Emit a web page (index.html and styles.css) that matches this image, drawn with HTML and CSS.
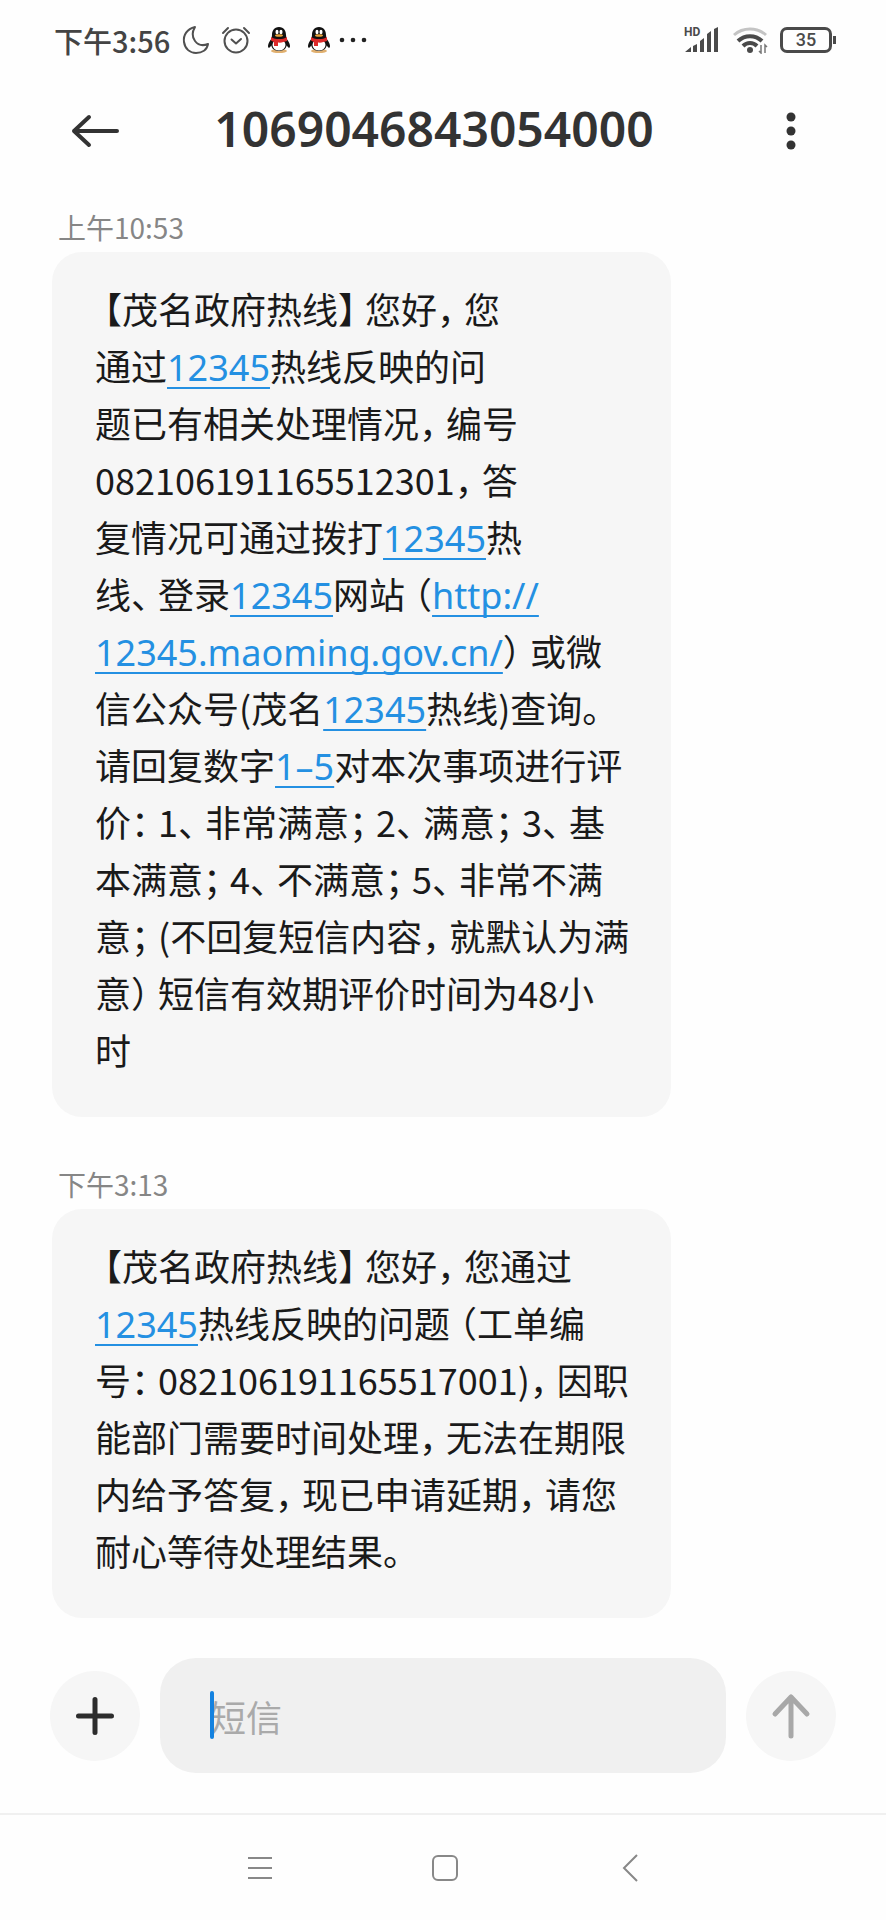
FILE: index.html
```html
<!DOCTYPE html>
<html lang="zh-CN">
<head>
    <meta charset="UTF-8">
    <meta name="viewport" content="width=device-width, initial-scale=1.0">
    <title>1069046843054000</title>
    <link rel="stylesheet" href="styles.css">
</head>
<body>

    <div class="status-bar">
        <span class="clock">下午3:56</span>
        <svg class="moon" width="28" height="30" viewBox="0 0 28 30" fill="none" stroke="#505050" stroke-width="2" stroke-linejoin="round">
            <path d="M13 2C5 4 1 10 2 17c1 7 6 11 12 11 6 0 11-3 12-9-5 2-10 1-13-3-3-4-3-9 0-14z"/>
        </svg>
        <svg class="alarm" width="30" height="30" viewBox="0 0 30 30" fill="none" stroke="#505050" stroke-width="2" stroke-linecap="round" stroke-linejoin="round">
            <circle cx="15" cy="16" r="11.5"/>
            <path d="M10.500 14.500l4.500 4 5-4.500M2 8l5-5M28 8l-5-5"/>
        </svg>
        <svg class="penguin" width="24" height="28" viewBox="0 0 24 28">
            <ellipse cx="12" cy="25" rx="8" ry="2" fill="#e0b070"/>
            <path d="M5 12C1 17 0 21 2 22l3-3zM19 12c4 5 5 9 3 10l-3-3z" fill="#111"/>
            <path d="M12 1c-5 0-7 4-7 8l-1 8c0 6 4 8 8 8s8-2 8-8l-1-8c0-4-2-8-7-8z" fill="#111"/>
            <ellipse cx="12" cy="19" rx="6.500" ry="5.500" fill="#fff"/>
            <ellipse cx="10" cy="6" rx="1.500" ry="2.300" fill="#fff"/>
            <ellipse cx="14" cy="6" rx="1.500" ry="2.300" fill="#fff"/>
            <ellipse cx="12" cy="9.500" rx="4" ry="1.300" fill="#e8a33a"/>
            <path d="M4 11c5 3 11 3 16 0v4c-3 1-6 2-9 1.500V20H7v-4l-3-1.500z" fill="#dc2a2a"/>
        </svg>
        <svg class="penguin" width="24" height="28" viewBox="0 0 24 28">
            <ellipse cx="12" cy="25" rx="8" ry="2" fill="#e0b070"/>
            <path d="M5 12C1 17 0 21 2 22l3-3zM19 12c4 5 5 9 3 10l-3-3z" fill="#111"/>
            <path d="M12 1c-5 0-7 4-7 8l-1 8c0 6 4 8 8 8s8-2 8-8l-1-8c0-4-2-8-7-8z" fill="#111"/>
            <ellipse cx="12" cy="19" rx="6.500" ry="5.500" fill="#fff"/>
            <ellipse cx="10" cy="6" rx="1.500" ry="2.300" fill="#fff"/>
            <ellipse cx="14" cy="6" rx="1.500" ry="2.300" fill="#fff"/>
            <ellipse cx="12" cy="9.500" rx="4" ry="1.300" fill="#e8a33a"/>
            <path d="M4 11c5 3 11 3 16 0v4c-3 1-6 2-9 1.500V20H7v-4l-3-1.500z" fill="#dc2a2a"/>
        </svg>
        <svg class="more-dots" width="28" height="6" viewBox="0 0 28 6" fill="#222">
            <circle cx="3" cy="3" r="2.300"/><circle cx="14" cy="3" r="2.300"/><circle cx="25" cy="3" r="2.300"/>
        </svg>

        <div class="status-right">
            <svg width="36" height="28" viewBox="0 0 36 28" fill="#4a4a4a">
                <text x="0" y="10" class="hd">HD</text>
                <path d="M1 26l6-5v5zM9 20l4-2v8H9zM16 15l4-3v14h-4zM23 8l4-3v21h-4zM30 3l4-2v25h-4z"/>
            </svg>
            <svg width="36" height="28" viewBox="0 0 36 28" fill="none" stroke-width="4">
                <path d="M2 9c9-8 23-8 32 0" stroke="#c4c4c4" stroke-width="3"/>
                <path d="M6 15c7-6.500 17-6.500 24 0M11 20c4-4 10-4 14 0" stroke="#4a4a4a"/>
                <circle cx="18" cy="24" r="3" fill="#4a4a4a"/>
                <path d="M29 19v8l-2-2M33 27v-8l2 2" stroke="#777" stroke-width="1.500"/>
            </svg>
            <div class="battery">35</div>
        </div>
    </div>

    <header class="top-bar">
        <button class="icon-btn" aria-label="返回">
            <svg width="50" height="36" viewBox="0 0 50 36" fill="none" stroke="#333" stroke-width="4" stroke-linecap="round" stroke-linejoin="round">
                <path d="M47 18H4M19 4L4 18l15 14"/>
            </svg>
        </button>
        <h1>1069046843054000</h1>
        <button class="icon-btn" aria-label="更多">
            <svg width="12" height="40" viewBox="0 0 12 40" fill="#333">
                <circle cx="6" cy="6" r="4.500"/><circle cx="6" cy="20" r="4.500"/><circle cx="6" cy="34" r="4.500"/>
            </svg>
        </button>
    </header>

    <main class="messages">
        <time>上午10:53</time>
        <p class="bubble">
            <span class="po">【</span>茂名政府热线<span class="pc">】</span>您好<span class="pc">，</span>您<br>
            通过<a href="tel:12345">12345</a>热线反映的问<br>
            题已有相关处理情况<span class="pc">，</span>编号<br>
            082106191165512301<span class="pc">，</span>答<br>
            复情况可通过拨打<a href="tel:12345">12345</a>热<br>
            线<span class="pc">、</span>登录<a href="tel:12345">12345</a>网站<span class="po">（</span><a href="http://12345.maoming.gov.cn/">http://<br>12345.maoming.gov.cn/</a><span class="pc">）</span>或微<br>
            信公众号(茂名<a href="tel:12345">12345</a>热线)查询。<br>
            请回复数字<a href="#reply">1–5</a>对本次事项进行评<br>
            价<span class="pc">：</span>1<span class="pc">、</span>非常满意<span class="pc">；</span>2<span class="pc">、</span>满意<span class="pc">；</span>3<span class="pc">、</span>基<br>
            本满意<span class="pc">；</span>4<span class="pc">、</span>不满意<span class="pc">；</span>5<span class="pc">、</span>非常不满<br>
            意<span class="pc">；</span>(不回复短信内容<span class="pc">，</span>就默认为满<br>
            意<span class="pc">）</span>短信有效期评价时间为48小<br>
            时
        </p>

        <time>下午3:13</time>
        <p class="bubble">
            <span class="po">【</span>茂名政府热线<span class="pc">】</span>您好<span class="pc">，</span>您通过<br>
            <a href="tel:12345">12345</a>热线反映的问题<span class="po">（</span>工单编<br>
            号<span class="pc">：</span>082106191165517001)<span class="pc">，</span>因职<br>
            能部门需要时间处理<span class="pc">，</span>无法在期限<br>
            内给予答复<span class="pc">，</span>现已申请延期<span class="pc">，</span>请您<br>
            耐心等待处理结果。
        </p>
    </main>

    <form class="composer">
        <button type="button" class="round-btn" aria-label="添加">
            <svg width="40" height="40" viewBox="0 0 40 40" stroke="#2c2c2c" stroke-width="5" stroke-linecap="round">
                <path d="M20 3.500v33M3.500 20h33"/>
            </svg>
        </button>
        <div class="field">
            <input type="text" id="reply" placeholder="短信" aria-label="短信">
            <span class="caret"></span>
        </div>
        <button type="button" class="round-btn" aria-label="发送">
            <svg width="40" height="46" viewBox="0 0 40 46" fill="none" stroke="#a8a8a8" stroke-width="5" stroke-linecap="round" stroke-linejoin="round">
                <path d="M20 43V4M4 21L20 4l16 17"/>
            </svg>
        </button>
    </form>

    <nav class="nav-bar">
        <button aria-label="任务">
            <svg width="28" height="28" viewBox="0 0 28 28" stroke="#888" stroke-width="2">
                <path d="M2 4h24M2 14h24M2 24h24"/>
            </svg>
        </button>
        <button aria-label="主页">
            <svg width="28" height="28" viewBox="0 0 28 28" fill="none" stroke="#888" stroke-width="2">
                <rect x="2" y="2" width="24" height="24" rx="5"/>
            </svg>
        </button>
        <button aria-label="返回">
            <svg width="28" height="28" viewBox="0 0 28 28" fill="none" stroke="#888" stroke-width="2">
                <path d="M21 1L8 14l13 13"/>
            </svg>
        </button>
    </nav>

</body>
</html>
```

FILE: styles.css
```css
* {
    box-sizing: border-box;
}
body {
    margin: 0;
    min-height: 100vh;
    display: flex;
    flex-direction: column;
    background: #fefefe;
    color: #1a1a1a;
    font-family: "Noto Sans CJK SC", sans-serif;
}
button {
    padding: 0;
    border: none;
    background: none;
    display: flex;
    align-items: center;
    justify-content: center;
}
svg {
    display: block;
}

/* status bar */
.status-bar {
    display: flex;
    align-items: center;
    height: 80px;
    padding: 0 50px 0 54px;
}
.clock {
    font-size: 29px;
    font-weight: 500;
    color: #444;
}
.moon {
    margin-left: 12px;
}
.alarm {
    margin-left: 11px;
}
.penguin {
    margin-left: 16px;
}
.more-dots {
    margin-left: 8px;
}
.status-right {
    display: flex;
    align-items: center;
    gap: 12px;
    margin-left: auto;
}
.hd {
    font: 700 12px Roboto, sans-serif;
}
.battery {
    position: relative;
    width: 52px;
    height: 26px;
    border: 3px solid #4a4a4a;
    border-radius: 7px;
    margin-right: 4px;
    font: 500 18px/20px Roboto, sans-serif;
    color: #4a4a4a;
    text-align: center;
}
.battery::after {
    content: "";
    position: absolute;
    right: -7px;
    top: 6px;
    width: 3px;
    height: 8px;
    background: #4a4a4a;
}

/* title */
.top-bar {
    display: flex;
    align-items: center;
    height: 102px;
    padding: 0 60px 0 70px;
}
.top-bar h1 {
    flex: 1;
    margin: 0;
    padding: 0 28px 4px 0;
    font: 600 48px/64px "Noto Sans", sans-serif;
    color: #333;
    text-align: center;
}
.icon-btn {
    width: 70px;
    height: 60px;
}
.icon-btn:first-child {
    justify-content: flex-start;
}

/* messages */
.messages {
    flex: 1;
    padding: 27px 50px 0 52px;
}
time {
    display: block;
    margin: 0 6px 7px;
    font-size: 28px;
    line-height: 36px;
    color: #868686;
}
.bubble {
    width: 79%;
    margin: 0 0 49px;
    padding: 28px 30px 39px 43px;
    border-radius: 30px;
    background: #f6f6f6;
    font-size: 36px;
    line-height: 57px;
}
.bubble:last-child {
    margin-bottom: 40px;
}
.bubble a {
    font-family: "Noto Sans", sans-serif;
    line-height: 36px;
    color: #2490e2;
    text-decoration-thickness: 2px;
    text-underline-offset: 6px;
    text-decoration-skip-ink: none;
}
/* half-width punctuation, with air on its outer side */
.po,
.pc {
    font-feature-settings: "halt";
}
.po {
    padding-left: 9px;
}
.pc {
    padding-right: 9px;
}

/* composer */
.composer {
    display: flex;
    align-items: center;
    gap: 20px;
    padding: 0 50px 40px;
}
.round-btn {
    flex: none;
    width: 90px;
    height: 90px;
    border-radius: 50%;
    background: #f6f6f6;
}
.field {
    position: relative;
    flex: 1;
}
.field input {
    display: block;
    width: 100%;
    height: 115px;
    padding: 0 50px;
    border: none;
    border-radius: 36px;
    background: #f0f0f0;
    font: 36px "Noto Sans CJK SC", sans-serif;
}
.field input::placeholder {
    color: #aaa;
    opacity: 1;
}
.caret {
    position: absolute;
    left: 50px;
    top: 33px;
    width: 4px;
    height: 48px;
    border-radius: 2px;
    background: #1482e0;
}

/* system navigation */
.nav-bar {
    display: flex;
    justify-content: center;
    gap: 125px;
    height: 107px;
    padding-left: 3px;
    border-top: 2px solid #f0f0f0;
}
.nav-bar button {
    width: 60px;
}
```
